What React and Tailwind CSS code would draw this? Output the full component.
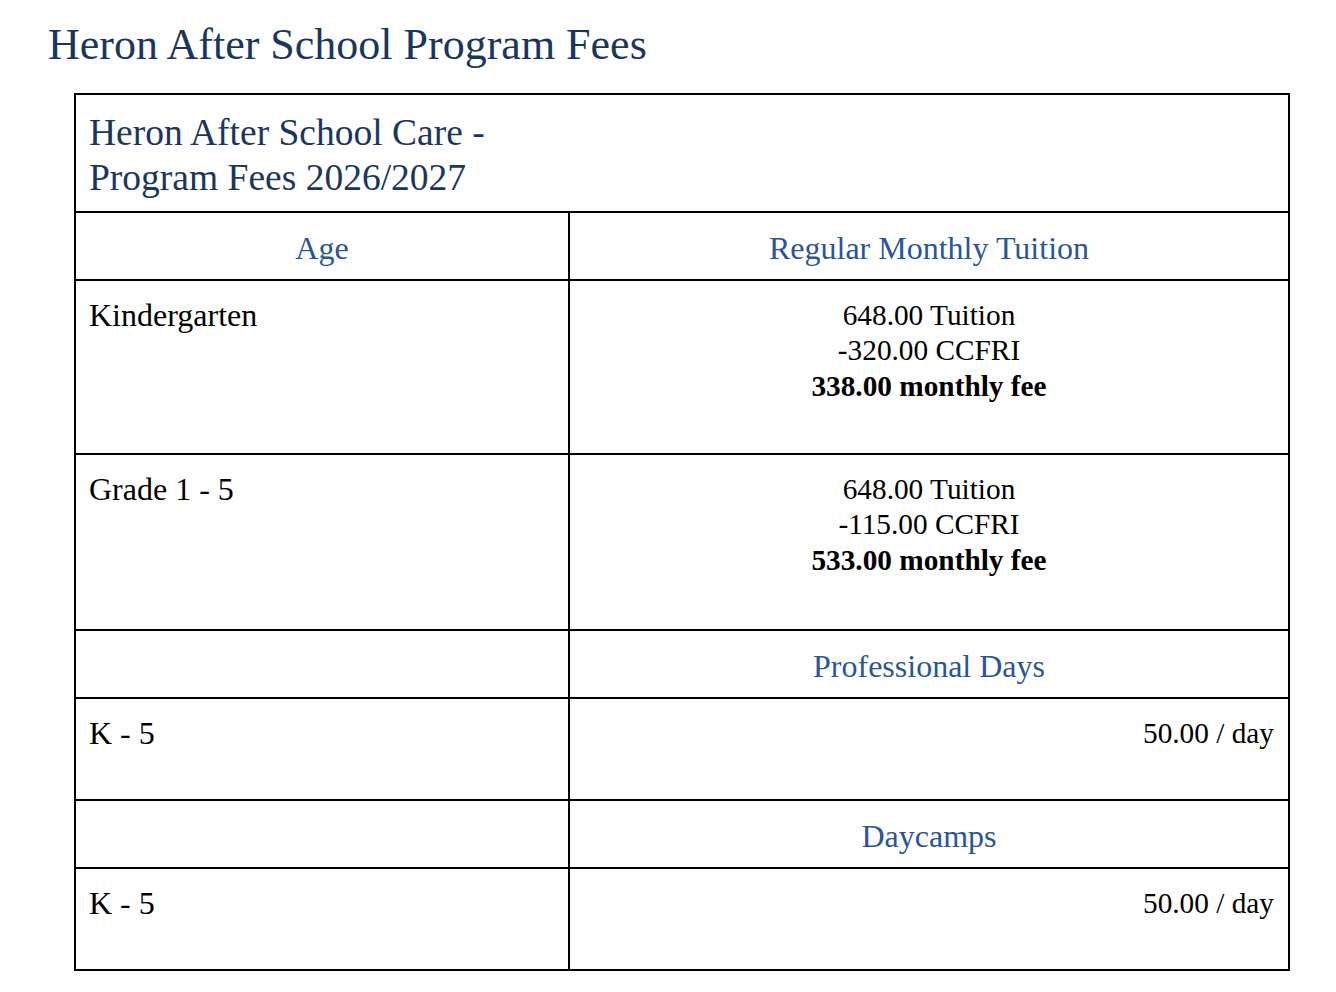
import React from 'react'

const serif = "font-['Liberation_Serif','Times_New_Roman',serif]"

function HeadCell({ children }) {
  return (
    <div className="bg-white h-[66px] pt-[17px] text-center text-[32px] leading-[36px] text-[#2b5597]">
      {children}
    </div>
  )
}

function AgeCell({ h, children }) {
  return (
    <div className={`bg-white pt-[16px] pl-[13px] text-[32px] leading-[36px] text-black ${h}`}>
      {children}
    </div>
  )
}

function DayCell({ children }) {
  return (
    <div className="bg-white h-[100px] pt-[16px] pr-[14px] text-right text-[29.3px] leading-[36px] text-black">
      {children}
    </div>
  )
}

export default function App() {
  const rows = [
    { age: 'Kindergarten', h: 'h-[172px]', credit: '-320.00 CCFRI', total: '338.00 monthly fee' },
    { age: 'Grade 1 - 5', h: 'h-[174px]', credit: '-115.00 CCFRI', total: '533.00 monthly fee' },
  ]

  return (
    <div className={`min-h-screen bg-white pl-[48px] pt-[20px] ${serif}`}>
      <h1 className="text-[44px] leading-[50px] text-[#1b365d]">Heron After School Program Fees</h1>

      {/* fee table */}
      <div className="mt-[23px] ml-[26px] w-[1216px] grid grid-cols-[492px_718px] gap-[2px] bg-black p-[2px]">
        <div className="col-span-2 bg-white h-[116px] pt-[15px] pl-[13px] text-[37.5px] leading-[45px] text-[#1b365d]">
          Heron After School Care -<br />
          Program Fees 2026/2027
        </div>

        <HeadCell>Age</HeadCell>
        <HeadCell>Regular Monthly Tuition</HeadCell>

        {rows.map((r) => (
          <React.Fragment key={r.age}>
            <AgeCell h={r.h}>{r.age}</AgeCell>
            <div className={`bg-white pt-[17px] text-center text-[29.3px] leading-[35.4px] text-black ${r.h}`}>
              <div>648.00 Tuition</div>
              <div>{r.credit}</div>
              <div className="font-bold">{r.total}</div>
            </div>
          </React.Fragment>
        ))}

        <div className="bg-white h-[66px]" />
        <HeadCell>Professional Days</HeadCell>
        <AgeCell h="h-[100px]">K - 5</AgeCell>
        <DayCell>50.00 / day</DayCell>

        <div className="bg-white h-[66px]" />
        <HeadCell>Daycamps</HeadCell>
        <AgeCell h="h-[100px]">K - 5</AgeCell>
        <DayCell>50.00 / day</DayCell>
      </div>
    </div>
  )
}
